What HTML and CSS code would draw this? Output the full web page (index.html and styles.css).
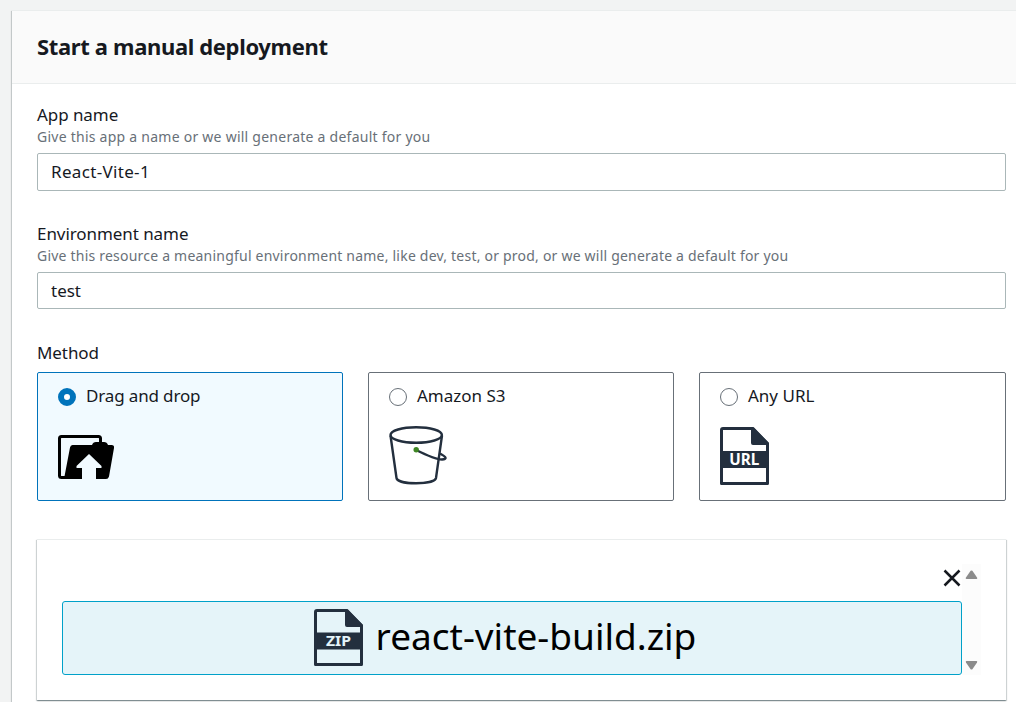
FILE: index.html
```html
<!DOCTYPE html>
<html lang="en">
<head>
<meta charset="utf-8">
<title>Start a manual deployment</title>
<link rel="stylesheet" href="styles.css">
</head>
<body>
<main class="panel">
  <header class="panel-header"><h1 class="title">Start a manual deployment</h1></header>
  <form class="panel-body">
    <div class="field">
      <label class="label" for="app">App name</label>
      <p class="hint hint-app">Give this app a name or we will generate a default for you</p>
      <input class="input input-app" id="app" type="text" value="React-Vite-1">
    </div>
    <div class="field">
      <label class="label" for="env">Environment name</label>
      <p class="hint">Give this resource a meaningful environment name, like dev, test, or prod, or we will generate a default for you</p>
      <input class="input input-env" id="env" type="text" value="test">
    </div>
    <div class="methods-label label">Method</div>
    <div class="methods">
      <label class="card card-selected">
        <span class="choice"><span class="radio radio-on"></span><span class="choice-text text-drag">Drag and drop</span></span>
        <svg class="icon" width="60" height="60" viewBox="0 0 60 60">
          <path d="M7 51.500H3.500Q1.500 51.500 1.500 49.500V12.500Q1.500 10.500 3.500 10.500H40.500Q42.500 10.500 42.500 12.500V17" fill="none" stroke="#000" stroke-width="3"/>
          <path d="M14.500 19H34Q35 16 38 16H46Q49 16 50 19H53.500Q56.500 19 56 22L51 50.500Q50.300 53 48 53H38V42H43.500V40L31 28L18.500 40V42H24V53H6L12 21.500Q12.500 19 14.500 19Z" fill="#000"/>
        </svg>
      </label>
      <label class="card">
        <span class="choice"><span class="radio"></span><span class="choice-text">Amazon S3</span></span>
        <svg class="icon" width="60" height="60" viewBox="0 0 60 60" fill="none" stroke="#232f3e" stroke-width="2.400">
          <ellipse cx="27.200" cy="9" rx="25.700" ry="7.800"/>
          <path d="M1.500 9.500L7.500 52C8.500 59 45.500 59 47 52L53 9.500"/>
          <path d="M27.200 24C38 29.500 47 33.500 53 33.500C58.500 33 57.500 31 51 27.500"/>
          <circle cx="27.200" cy="23.700" r="2.700" fill="#3f8624" stroke="none"/>
        </svg>
      </label>
      <label class="card">
        <span class="choice"><span class="radio"></span><span class="choice-text">Any URL</span></span>
        <svg class="icon" width="60" height="60" viewBox="0 0 60 60">
          <path d="M3 2.500H33L47.500 17.500V57.500H1.500V4Q1.500 2.500 3 2.500Z" fill="none" stroke="#232f3e" stroke-width="3" stroke-linejoin="round"/>
          <path d="M31 1H33L49 17V19H33Q31 19 31 17ZM0 25H49V42H0Z" fill="#232f3e"/>
          <text class="icon-text" x="24.300" y="39" textLength="30" lengthAdjust="spacingAndGlyphs" fill="#fff">URL</text>
        </svg>
      </label>
    </div>
    <section class="drop">
      <div class="scroller">
        <div class="files">
          <div class="remove-row">
            <svg width="18" height="18" viewBox="0 0 18 18"><path d="M1.500 1.500L16.500 16.500M16.500 1.500L1.500 16.500" fill="none" stroke="#16191f" stroke-width="2.500"/></svg>
          </div>
          <div class="file">
            <svg class="file-icon" width="50" height="60" viewBox="0 0 50 60">
              <path d="M3 2.500H33L47.500 17.500V56.500H1.500V4Q1.500 2.500 3 2.500Z" fill="none" stroke="#232f3e" stroke-width="3" stroke-linejoin="round"/>
              <path d="M31 1H33L49 17V19H33Q31 19 31 17ZM0 24.500H49V41.500H0Z" fill="#232f3e"/>
              <text class="icon-text icon-text-zip" x="24.500" y="38" textLength="25" lengthAdjust="spacingAndGlyphs" fill="#e5f4f9">ZIP</text>
            </svg>
            <span class="file-name">react-vite-build.zip</span>
          </div>
        </div>
        <div class="track">
          <svg width="13" height="10" viewBox="0 0 13 10"><path d="M5.600 .8Q6.500 0 7.400 .8L12 7.500Q12.800 9 11.500 9H1.500Q.2 9 1 7.500Z" fill="#8b8b8b"/></svg>
          <svg width="13" height="10" viewBox="0 0 13 10"><path d="M5.600 9.200Q6.500 10 7.400 9.200L12 2.500Q12.800 1 11.500 1H1.500Q.2 1 1 2.500Z" fill="#8b8b8b"/></svg>
        </div>
      </div>
    </section>
  </form>
</main>
</body>
</html>
```
FILE: styles.css
```css
* { box-sizing: border-box; }
body {
  margin: 0;
  height: 702px;
  overflow: hidden;
  padding: 10px 0 0 12px;
  background: #f2f3f3;
  color: #16191f;
  font-family: "Noto Sans", "Open Sans", sans-serif;
}
.panel {
  width: 1020px;
  height: 720px;
  background: #fff;
  border-top: 1px solid #eaeded;
  box-shadow: 0 1px 1px 0 rgba(0,28,36,.3), -1px 1px 1px 0 rgba(0,28,36,.15);
}
.panel-header {
  height: 73px;
  padding: 19px 25px;
  background: #fafafa;
  border-bottom: 1px solid #eaeded;
}
.title { margin: 0; font-size: 22px; line-height: 32px; font-weight: 700; letter-spacing: -.35px; white-space: nowrap; }
.panel-body { width: 994px; padding: 20px 0 0 25px; }
.field { display: flex; flex-direction: column; height: 119px; }
.label { font-size: 17px; line-height: 22px; letter-spacing: -.07px; white-space: nowrap; }
.hint { margin: 0; font-size: 14px; line-height: 22px; letter-spacing: .215px; color: #687078; white-space: nowrap; }
.hint-app { letter-spacing: .25px; }
.input {
  height: 38px;
  margin-top: 5px;
  padding: 0 13px;
  border: 1px solid #aab7b8;
  border-radius: 2px;
  background: #fff;
  color: #16191f;
  font: 17px "Noto Sans", "Open Sans", sans-serif;
}
.input-app { padding-bottom: 2px; letter-spacing: .33px; }
.input-env { height: 37px; }
.methods-label { height: 30px; }
.methods { display: grid; grid-template-columns: 306px 306px 307px; gap: 25px; height: 129px; }
.card { display: flex; flex-direction: column; padding: 12px 20px; border: 1px solid #687078; border-radius: 2px; }
.card-selected { border-color: #0073bb; background: #f1faff; }
.choice { display: flex; align-items: center; gap: 10px; height: 24px; font-size: 17px; white-space: nowrap; }
.choice-text { padding-bottom: 3px; }
.text-drag { letter-spacing: -.15px; }
.radio { flex: none; width: 18px; height: 18px; border: 1px solid #687078; border-radius: 50%; background: #fff; }
.radio-on { border: 6px solid #0073bb; }
.icon { margin-top: 17px; }
.icon-text { font: 700 16px "Noto Sans", sans-serif; text-anchor: middle; }
.icon-text-zip { font-size: 15px; }
.drop {
  height: 161px;
  margin-top: 38px;
  padding: 24px 25px;
  border-top: 1px solid #eaeded;
  box-shadow: 0 1px 1px 0 rgba(0,28,36,.3), 1px 1px 1px 0 rgba(0,28,36,.15), -1px 1px 1px 0 rgba(0,28,36,.15);
}
.scroller { display: flex; height: 111px; }
.files { width: 900px; }
.remove-row { display: flex; justify-content: flex-end; height: 37px; padding: 5px 1px 0; }
.file {
  display: flex;
  justify-content: center;
  align-items: center;
  gap: 12px;
  height: 74px;
  padding-right: 14px;
  border: 1px solid #00a1c9;
  border-radius: 3px;
  background: #e5f4f9;
  color: #000;
}
.file-name { padding-bottom: 4px; font-size: 37px; line-height: 50px; white-space: nowrap; }
.track { display: flex; flex-direction: column; justify-content: space-between; align-items: center; width: 19px; padding: 6px 0 5px; background: #fcfcfc; }
```
